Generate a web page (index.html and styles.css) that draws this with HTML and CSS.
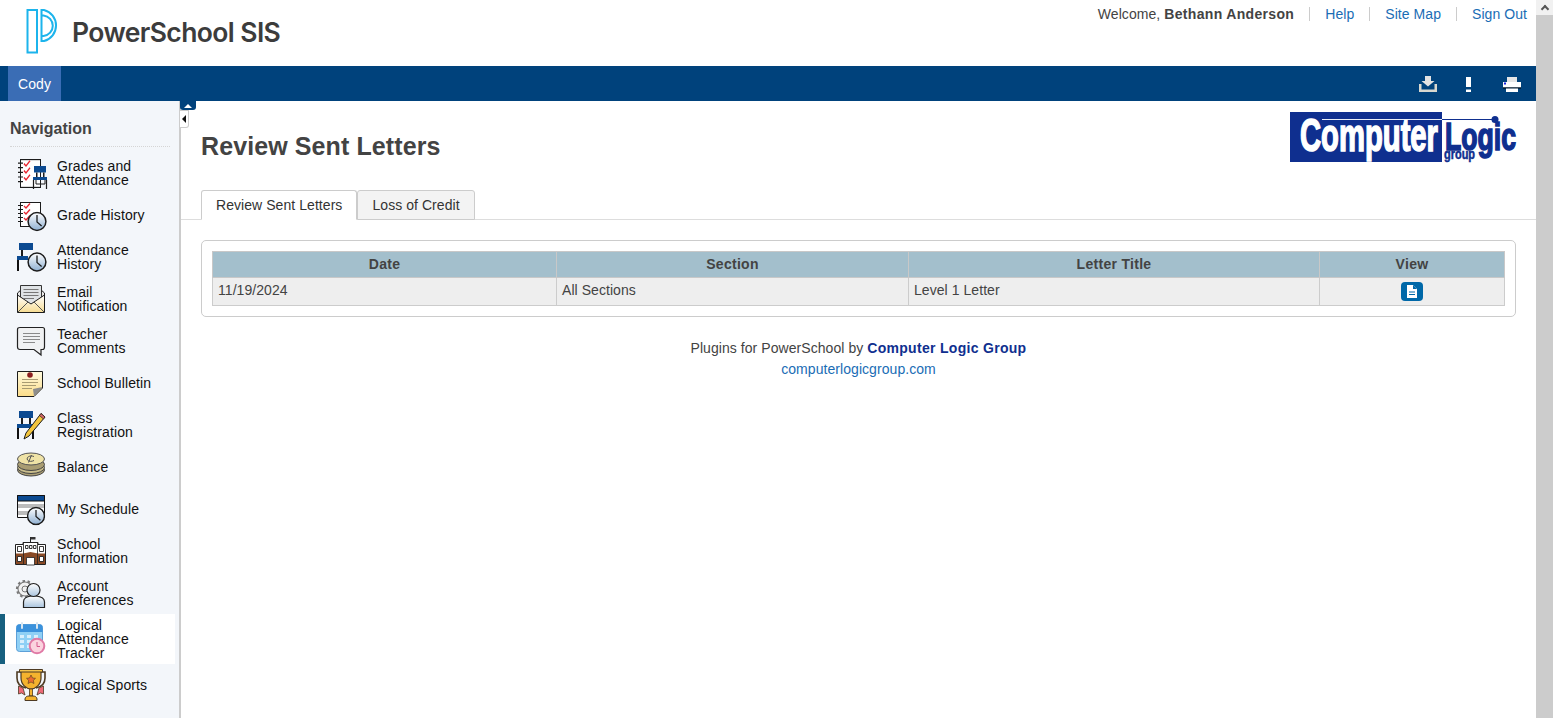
FILE: index.html
```html
<!DOCTYPE html>
<html lang="en">
<head>
<meta charset="utf-8">
<title>Review Sent Letters</title>
<link rel="stylesheet" href="styles.css">
</head>
<body>
<svg class="sprite" aria-hidden="true">
  <defs>
    <linearGradient id="clockfill" x1="0" y1="0" x2="0" y2="1"><stop offset="0" stop-color="#fff"/><stop offset="1" stop-color="#8fb0d2"/></linearGradient>
    <linearGradient id="env" x1="0" y1="0" x2="0" y2="1"><stop offset="0" stop-color="#fff"/><stop offset="1" stop-color="#f6dc92"/></linearGradient>
    <linearGradient id="note" x1="0" y1="0" x2="0" y2="1"><stop offset="0" stop-color="#fffbe0"/><stop offset="1" stop-color="#fbdc88"/></linearGradient>
    <linearGradient id="person" x1="0" y1="0" x2="0" y2="1"><stop offset="0" stop-color="#fff"/><stop offset="1" stop-color="#a9c4de"/></linearGradient>
    <symbol id="clock" viewBox="0 0 20 20">
      <circle cx="10" cy="10" r="8.9" fill="url(#clockfill)" stroke="#1c1c1c" stroke-width="1.5"/>
      <path d="M10 3.6V10.4L14.6 14.4" fill="none" stroke="#1c1c1c" stroke-width="1.3"/>
    </symbol>
    <symbol id="book" viewBox="0 0 25 25" preserveAspectRatio="none">
      <rect x="3.5" y="0.5" width="20" height="24" fill="#fff" stroke="#1c1c1c"/>
      <path d="M1 3.5H6M1 7.5H6M1 11.5H6M1 15.5H6M1 19.5H6" stroke="#1c1c1c" stroke-width="1"/>
      <path d="M7 4L9 6L13 1.5M7 10L9 12L13 7.5M7 16L9 18L13 13.5" fill="none" stroke="#e8252f" stroke-width="1.3"/>
    </symbol>
  </defs>
</svg>
<div class="window">
  <div class="app">
    <header class="top">
      <div class="brand">
        <svg class="brand-mark" viewBox="0 0 36 45" aria-hidden="true">
          <path d="M1.500 1H11V43.500H1.500Z" fill="none" stroke="#1cb4ec" stroke-width="2"/>
          <path d="M15.500 1H18A16 16 0 0 1 18 32H15.500Z" fill="none" stroke="#1cb4ec" stroke-width="2"/>
          <path d="M16 6.500H17.500A10.300 10.300 0 0 1 17.500 27H16" fill="none" stroke="#1cb4ec" stroke-width="2"/>
        </svg>
        <span class="brand-name">PowerSchool SIS</span>
      </div>
      <nav class="user-nav">
        <span class="welcome">Welcome, <b>Bethann Anderson</b></span>
        <a class="user-link" href="#">Help</a>
        <a class="user-link" href="#">Site Map</a>
        <a class="user-link" href="#">Sign Out</a>
      </nav>
    </header>
    <div class="bar">
      <span class="student-tab">Cody</span>
      <div class="bar-tools">
        <svg class="tool tool-dl" viewBox="0 0 18 16" aria-hidden="true">
          <path d="M6 0H12V5H15.5L9 10.5L2.5 5H6Z" fill="#e3e3e3"/>
          <path d="M0 8H2.5V13.5H15.5V8H18V16H0Z" fill="#d8d8cf"/>
        </svg>
        <svg class="tool tool-alert" viewBox="0 0 5 15" aria-hidden="true">
          <path d="M0 0H5V10H0Z" fill="#fff"/><path d="M0 12.5H5V15H0Z" fill="#fff"/>
        </svg>
        <svg class="tool tool-print" viewBox="0 0 18 15" aria-hidden="true">
          <path d="M4 0H14V5H4Z" fill="#e6e6e6"/>
          <path d="M0 5H18V10.5H0Z" fill="#fff"/>
          <path d="M1 5.5H3V7.500H1Z" fill="#1822e0"/>
          <path d="M0 10.500H18V11.500H0Z" fill="#000"/>
          <path d="M3 11.500H15V15H3Z" fill="#fff"/>
        </svg>
      </div>
    </div>
    <div class="body">
      <aside class="side">
        <h2 class="side-title">Navigation</h2>
        <ul class="side-list">
          <li class="side-item">
            <svg class="ico" viewBox="0 0 36 36" aria-hidden="true">
              <use href="#book" x="3" y="4" width="25" height="29"/>
              <path d="M19.500 25V34M32.500 25V34" stroke="#1c1c1c" stroke-width="1.2"/>
              <path d="M22 24V29H31V24" fill="none" stroke="#1c1c1c"/>
              <path d="M20 11H32V17.500H20Z" fill="#0b4a91"/><path d="M22 17.500H23.500V22H22ZM29 17.500H30.500V22H29Z" fill="#1c1c1c"/>
              <path d="M19 22H33V25H19Z" fill="#0b4a91"/>
            </svg>
            <span class="side-label">Grades and<br>Attendance</span>
          </li>
          <li class="side-item">
            <svg class="ico" viewBox="0 0 36 36" aria-hidden="true">
              <use href="#book" x="3" y="5" width="25" height="25"/>
              <use href="#clock" x="13" y="14.500" width="20" height="20"/>
            </svg>
            <span class="side-label">Grade History</span>
          </li>
          <li class="side-item">
            <svg class="ico" viewBox="0 0 36 36" aria-hidden="true">
              <path d="M5 4H19V11H5Z" fill="#0b4a91"/><path d="M7 11H9V17H7Z" fill="#1c1c1c"/>
              <path d="M3 17H14V21H3Z" fill="#0b4a91"/><path d="M3 21H5V32H3Z" fill="#111"/>
              <use href="#clock" x="13" y="13" width="20" height="20"/>
            </svg>
            <span class="side-label">Attendance<br>History</span>
          </li>
          <li class="side-item">
            <svg class="ico" viewBox="0 0 36 36" aria-hidden="true">
              <path d="M3.500 12L8 8H26L30.500 12V31.500H3.500Z" fill="#e9e9e9" stroke="#1c1c1c"/>
              <path d="M6.500 4.500H27.500V24H6.500Z" fill="#dfe3e6" stroke="#333"/>
              <path d="M9.500 8.500H24.500M9.500 11.500H24.500M9.500 14.500H24.500M9.500 17.500H20" stroke="#777"/>
              <path d="M3.500 14L17 23L30.500 14V31.500H3.500Z" fill="url(#env)" stroke="#1c1c1c"/>
              <path d="M3.500 31.500L14 21M30.500 31.500L20 21" stroke="#555" fill="none"/>
            </svg>
            <span class="side-label">Email<br>Notification</span>
          </li>
          <li class="side-item">
            <svg class="ico" viewBox="0 0 36 36" aria-hidden="true">
              <path d="M6 4.500H28.500Q30.500 4.500 30.500 6.500V24Q30.500 26.500 28.500 26.500H27V32L20 26.500H6Q3.500 26.500 3.500 24V6.500Q3.500 4.500 6 4.500Z" fill="#f0f1f2" stroke="#222" stroke-width="1.200"/>
              <path d="M9 10.500H26M9 13.500H26M9 16.500H26M9 19.500H21" stroke="#8a8a8a"/>
            </svg>
            <span class="side-label">Teacher<br>Comments</span>
          </li>
          <li class="side-item">
            <svg class="ico" viewBox="0 0 36 36" aria-hidden="true">
              <path d="M3.500 6.500H28.500V23L20 31.500H3.500Z" fill="url(#note)" stroke="#1c1c1c"/>
              <path d="M28.500 22L20 31.500L19 24Z" fill="#8d8d8d"/>
              <path d="M8 14.500H24M8 17.500H24M8 20.500H22M8 23.500H18" stroke="#a89b72"/>
              <circle cx="16" cy="10" r="2.800" fill="#8c1f1f"/>
            </svg>
            <span class="side-label">School Bulletin</span>
          </li>
          <li class="side-item">
            <svg class="ico" viewBox="0 0 36 36" aria-hidden="true">
              <path d="M5 4H19V11H5Z" fill="#0b4a91"/><path d="M7 11H9V17H7ZM15 11H17V17H15Z" fill="#1c1c1c"/>
              <path d="M3 17H20V21H3Z" fill="#0b4a91"/><path d="M3 21H5V32H3ZM18 21H20V32H18Z" fill="#111"/>
              <path d="M27 6.500L31 10L15 29L10 32L12 26Z" fill="#f3c53c" stroke="#1c1c1c"/>
              <path d="M27 6.500L31 10L29.500 12L25.500 8.500Z" fill="#d8686c" stroke="#1c1c1c" stroke-width=".7"/>
            </svg>
            <span class="side-label">Class<br>Registration</span>
          </li>
          <li class="side-item">
            <svg class="ico" viewBox="0 0 36 36" aria-hidden="true">
              <ellipse cx="17" cy="21" rx="13.500" ry="6" fill="#a99d73" stroke="#444"/>
              <ellipse cx="17" cy="18.500" rx="13.500" ry="6" fill="#c9bd8c" stroke="#444"/>
              <ellipse cx="17" cy="15.500" rx="13.500" ry="6" fill="#a99d73" stroke="#444"/>
              <ellipse cx="17" cy="10" rx="13.500" ry="6" fill="#efe3a6" stroke="#555"/>
              <path d="M20 7.500C16 6 12 8 13.500 11C15 13 18 12.500 20 11.500M17.500 6L14.500 13.500" fill="none" stroke="#555"/>
            </svg>
            <span class="side-label">Balance</span>
          </li>
          <li class="side-item">
            <svg class="ico" viewBox="0 0 36 36" aria-hidden="true">
              <path d="M3.500 4.500H30.500V26.500H3.500Z" fill="#fff" stroke="#111"/>
              <path d="M3.500 4.500H30.500V10H3.500Z" fill="#0b4a91" stroke="#111"/>
              <path d="M4 13H30V17H4ZM4 20H30V24H4Z" fill="#bcbcbc"/>
              <use href="#clock" x="12.500" y="15.500" width="19" height="19"/>
            </svg>
            <span class="side-label">My Schedule</span>
          </li>
          <li class="side-item">
            <svg class="ico" viewBox="0 0 36 36" aria-hidden="true">
              <path d="M16.500 4V10" stroke="#222"/><path d="M16.500 4H21.500V6.500H16.500Z" fill="#333"/>
              <path d="M1.500 11.500H9V9.500H24V11.500H31.500V31.500H1.500Z" fill="#fff" stroke="#222"/>
              <path d="M2 20.500H9L16.500 19L24 20.500H31V31H2Z" fill="#8a4a25"/>
              <path d="M9.500 10V31M23.500 10V31" stroke="#222" stroke-width=".8"/>
              <path d="M3.500 13.500H7.500V18.500H3.500ZM25.500 13.500H29.500V18.500H25.500ZM3.500 23.500H7.500V28.500H3.500ZM25.500 23.500H29.500V28.500H25.500ZM11.500 12.500H14V15.500H11.500ZM15.500 12.500H18V15.500H15.500ZM19.500 12.500H22V15.500H19.500Z" fill="#fff" stroke="#222" stroke-width=".9"/>
              <path d="M12.500 24.500H20.500V32H12.500Z" fill="#fff" stroke="#222" stroke-width=".8"/>
            </svg>
            <span class="side-label">School<br>Information</span>
          </li>
          <li class="side-item">
            <svg class="ico" viewBox="0 0 36 36" aria-hidden="true">
              <circle cx="11" cy="14" r="8" fill="none" stroke="#777" stroke-width="2.200" stroke-dasharray="2.500 2.500"/>
              <circle cx="11" cy="14" r="7" fill="#f2f2f2" stroke="#777" stroke-width="1.100"/>
              <circle cx="11" cy="14" r="3" fill="#f2f2f2" stroke="#777" stroke-width="1"/>
              <path d="M9.500 32.500V27C9.500 23 13 21.500 17 21H22C27 21.500 30.500 23 30.500 27V32.500Z" fill="url(#person)" stroke="#222" stroke-width="1.200"/>
              <circle cx="19.500" cy="15" r="6.500" fill="url(#person)" stroke="#222" stroke-width="1.200"/>
            </svg>
            <span class="side-label">Account<br>Preferences</span>
          </li>
          <li class="side-item side-item-active">
            <svg class="ico" viewBox="0 0 36 36" aria-hidden="true">
              <rect x="2.500" y="3.500" width="26" height="27" rx="3" fill="#8fd0f5" stroke="#5da0d8"/>
              <path d="M2.500 6.500Q2.500 3.500 5.500 3.500H25.500Q28.500 3.500 28.500 6.500V11H2.500Z" fill="#3b92dc"/>
              <path d="M8 2V7M23 2V7" stroke="#d9e6f0" stroke-width="2" stroke-linecap="round"/>
              <path d="M6 14H10V17H6ZM13 14H17V17H13ZM20 14H24V17H20ZM6 19H10V22H6ZM13 19H17V22H13ZM6 24H10V27H6ZM13 24H17V27H13Z" fill="#d9effc"/>
              <circle cx="23" cy="25" r="7.300" fill="#fbd3de" stroke="#e079a5" stroke-width="2"/>
              <path d="M23 21V25.500H26" fill="none" stroke="#d65a8e"/>
            </svg>
            <span class="side-label">Logical<br>Attendance<br>Tracker</span>
          </li>
          <li class="side-item">
            <svg class="ico" viewBox="0 0 36 36" aria-hidden="true">
              <path d="M7 5H3V11C3 17 7 20 12 21M27 5H31V11C31 17 27 20 22 21" fill="none" stroke="#4d3a22" stroke-width="1.600"/>
              <path d="M4.500 19L9 21L11 28L7.500 26L4.500 27ZM29.500 19L25 21L23 28L26.500 26L29.500 27Z" fill="#ee6a78" stroke="#4d3a22" stroke-width=".8"/>
              <path d="M7 3H27V11C27 18 21 22 17 22C13 22 7 18 7 11Z" fill="#f5b32e" stroke="#4d3a22" stroke-width="1.200"/>
              <path d="M5.500 2.500H28.500V5H5.500Z" fill="#f7c64c" stroke="#4d3a22"/>
              <path d="M17 8L18.500 11L21.500 11.300L19.300 13.400L20 16.500L17 15L14 16.500L14.700 13.400L12.500 11.300L15.500 11Z" fill="#ed6c2f" stroke="#4d3a22" stroke-width=".6"/>
              <path d="M15.500 22H18.500V29H15.500Z" fill="#f5b32e" stroke="#4d3a22" stroke-width=".8"/>
              <path d="M11 33.500V32C11 30 13 29 15 29H19C21 29 23 30 23 32V33.500Z" fill="#f5b32e" stroke="#4d3a22"/>
            </svg>
            <span class="side-label">Logical Sports</span>
          </li>
        </ul>
      </aside>
      <main class="main">
        <button class="pull pull-up" type="button" aria-label="Collapse header"><span class="arrow-up"></span></button>
        <button class="pull pull-left" type="button" aria-label="Collapse navigation"><span class="arrow-left"></span></button>
        <div class="head">
          <h1 class="page-title">Review Sent Letters</h1>
          <svg class="clg-logo" viewBox="0 0 227 50" role="img" aria-label="Computer Logic group">
            <rect x="0" y="0" width="152" height="50" fill="#0f2f8f"/>
            <path d="M32 7.500H152" stroke="#e8edf7" stroke-width="1.200"/>
            <path d="M152 7.500H205" stroke="#0f2f8f" stroke-width="1.200"/>
            <circle cx="205" cy="7.500" r="3.500" fill="#0f2f8f"/>
            <text class="clg-a" x="10" y="38.500" textLength="138" lengthAdjust="spacingAndGlyphs">Computer</text>
            <text class="clg-b" x="155" y="38" textLength="71" lengthAdjust="spacingAndGlyphs">Logic</text>
            <text class="clg-c" x="154" y="47" textLength="31" lengthAdjust="spacingAndGlyphs">group</text>
          </svg>
        </div>
        <div class="tabs">
          <span class="tab tab-on">Review Sent Letters</span>
          <span class="tab">Loss of Credit</span>
        </div>
        <section class="box">
          <table class="grid">
            <colgroup><col class="c1"><col class="c2"><col class="c3"><col class="c4"></colgroup>
            <thead>
              <tr><th>Date</th><th>Section</th><th>Letter Title</th><th>View</th></tr>
            </thead>
            <tbody>
              <tr>
                <td>11/19/2024</td>
                <td>All Sections</td>
                <td>Level 1 Letter</td>
                <td class="cell-view">
                  <a class="doc-btn" href="#" aria-label="View letter">
                    <svg class="doc-ico" viewBox="0 0 10 13" aria-hidden="true">
                      <path d="M0 0H6L10 4V13H0Z" fill="#fff"/>
                      <path d="M6 0V4H10" fill="#0068a8"/>
                      <path d="M2 6.500H8V7.500H2ZM2 9H8V10H2Z" fill="#0068a8"/>
                    </svg>
                  </a>
                </td>
              </tr>
            </tbody>
          </table>
        </section>
        <footer class="credit">
          <div>Plugins for PowerSchool by <a class="credit-name" href="#">Computer Logic Group</a></div>
          <div><a class="credit-link" href="#">computerlogicgroup.com</a></div>
        </footer>
      </main>
    </div>
  </div>
  <div class="scroll">
    <div class="scroll-btn"><span class="scroll-chev"></span></div>
  </div>
</div>
</body>
</html>
```
FILE: styles.css
```css
* { box-sizing: border-box; }
html, body { margin: 0; height: 100%; overflow: hidden; }
body { font-family: "Liberation Sans", Arial, sans-serif; font-size: 14px; letter-spacing: .06px; color: #434343; background: #fff; }
b { letter-spacing: .33px; }
.sprite { display: block; width: 0; height: 0; }
.window { display: flex; height: 718px; }
.app { width: 1536px; display: flex; flex-direction: column; }
.top { height: 66px; display: flex; justify-content: space-between; flex: none; }
.brand { display: flex; align-items: flex-start; padding: 9px 0 0 26px; }
.brand-mark { width: 36px; height: 45px; display: block; }
.brand-name { font-family: Inter, sans-serif; font-weight: 600; font-size: 26.500px; line-height: 46px; letter-spacing: -0.600px; color: #3c3c3c; margin-left: 10px; }
.user-nav { display: flex; align-items: center; height: 28px; padding-right: 9px; }
.welcome { padding-right: 15px; }
.user-link { color: #1a6db5; text-decoration: none; padding-left: 15px; padding-right: 15px; border-left: 1px solid #ccc; line-height: 14px; }
.user-link:last-child { padding-right: 0; }
.bar { height: 35px; flex: none; background: #00427c; display: flex; justify-content: space-between; padding-left: 8px; }
.student-tab { width: 53px; background: #3a6db5; color: #fff; display: flex; align-items: center; justify-content: center; }
.bar-tools { display: flex; align-items: center; padding-right: 15px; }
.tool { display: block; }
.tool-dl { width: 18px; height: 16px; margin-top: 1px; }
.tool-alert { width: 5px; height: 15px; margin-left: 29px; margin-top: 1px; }
.tool-print { width: 18px; height: 15px; margin-left: 32px; margin-top: 1px; }
.body { flex: 1; display: flex; min-height: 0; }
.side { width: 181px; flex: none; background: #f3f6fa; border-right: 2px solid #ccc; padding-top: 18px; }
.side-title { margin: 0 9px 0 10px; font-size: 16px; line-height: 20px; font-weight: bold; letter-spacing: 0; color: #434343; padding-bottom: 7px; border-bottom: 1px dotted #d5d5d5; height: 28px; }
.side-list { list-style: none; margin: 5px 0 0; padding: 0; }
.side-item { height: 42px; display: flex; align-items: center; padding-left: 14px; color: #111; line-height: 14px; letter-spacing: .1px; }
.side-item-active { height: 50px; width: 175px; background: #fff; border-left: 5px solid #17607f; padding-left: 9px; margin: 0; }
.ico { width: 36px; height: 36px; flex: none; margin-right: 7px; display: block; }
.main { flex: 1; position: relative; min-width: 0; }
.pull { position: absolute; padding: 0; margin: 0; display: flex; align-items: center; justify-content: center; }
.pull-up { left: -1px; top: 0; width: 16px; height: 9px; background: #00427c; border: 0; border-radius: 0 0 3px 3px; }
.pull-left { left: -1px; top: 9px; width: 9px; height: 18px; background: #fff; border: 1px solid #ccc; border-left: 0; border-radius: 0 0 3px 0; }
.arrow-up { width: 0; height: 0; border-left: 4px solid transparent; border-right: 4px solid transparent; border-bottom: 4px solid #fff; }
.arrow-left { width: 0; height: 0; border-top: 4px solid transparent; border-bottom: 4px solid transparent; border-right: 4px solid #111; }
.head { height: 89px; display: flex; justify-content: space-between; padding: 11px 19px 0 20px; }
.page-title { margin: 19px 0 0; font-size: 25px; line-height: 30px; font-weight: bold; letter-spacing: .1px; color: #434343; }
.clg-logo { width: 227px; height: 50px; display: block; margin-left: auto; overflow: visible; }
.clg-a { font-family: "Liberation Sans", sans-serif; font-weight: bold; font-size: 46px; letter-spacing: 0; fill: #fff; stroke: #fff; stroke-width: 1.600px; }
.clg-b { font-family: "Liberation Sans", sans-serif; font-weight: bold; font-size: 38px; letter-spacing: 0; fill: #0f2f8f; stroke: #0f2f8f; stroke-width: 1.600px; }
.clg-c { font-family: "Liberation Sans", sans-serif; font-weight: bold; font-size: 14px; letter-spacing: 0; fill: #0f2f8f; stroke: #0f2f8f; stroke-width: .5px; }
.tabs { height: 30px; display: flex; align-items: flex-end; padding-left: 20px; border-bottom: 1px solid #ddd; }
.tab { height: 30px; padding: 0 14px; display: flex; align-items: center; color: #333; background: #f3f3f3; border: 1px solid #ccc; border-radius: 3px 3px 0 0; margin-bottom: -1px; }
.tab-on { background: #fff; border-bottom-color: #fff; }
.box { margin: 20px 20px 0; border: 1px solid #ccc; border-radius: 5px; padding: 10px 11px 10px 10px; }
.grid { width: 100%; border-collapse: collapse; table-layout: fixed; }
.c1 { width: 344px; } .c2 { width: 352px; } .c3 { width: 411px; } .c4 { width: 185px; }
.grid th { height: 26px; padding: 0 0 2px; background: #a3bfcc; border: 1px solid #c8c8c8; font-weight: bold; letter-spacing: .3px; color: #434343; text-align: center; }
.grid td { height: 28px; background: #eee; border: 1px solid #ccc; padding: 4px 5px 0; vertical-align: top; color: #434343; }
.grid td.cell-view { padding: 4px 0 0; }
.doc-btn { display: flex; width: 22px; height: 19px; margin: 0 auto; background: #0068a8; border-radius: 4px; align-items: center; justify-content: center; }
.doc-ico { width: 10px; height: 13px; display: block; }
.credit { margin-top: 21px; text-align: center; line-height: 21px; }
.credit-name { color: #0f2f8f; font-weight: bold; letter-spacing: .3px; text-decoration: none; }
.credit-link { color: #1a6db5; text-decoration: none; }
.scroll { width: 17px; flex: none; background: #ccc; }
.scroll-btn { height: 15px; background: #f1f1f1; display: flex; align-items: center; justify-content: center; }
.scroll-chev { width: 6px; height: 6px; border-left: 2px solid #555; border-top: 2px solid #555; transform: rotate(45deg); margin-top: 3px; }
```
